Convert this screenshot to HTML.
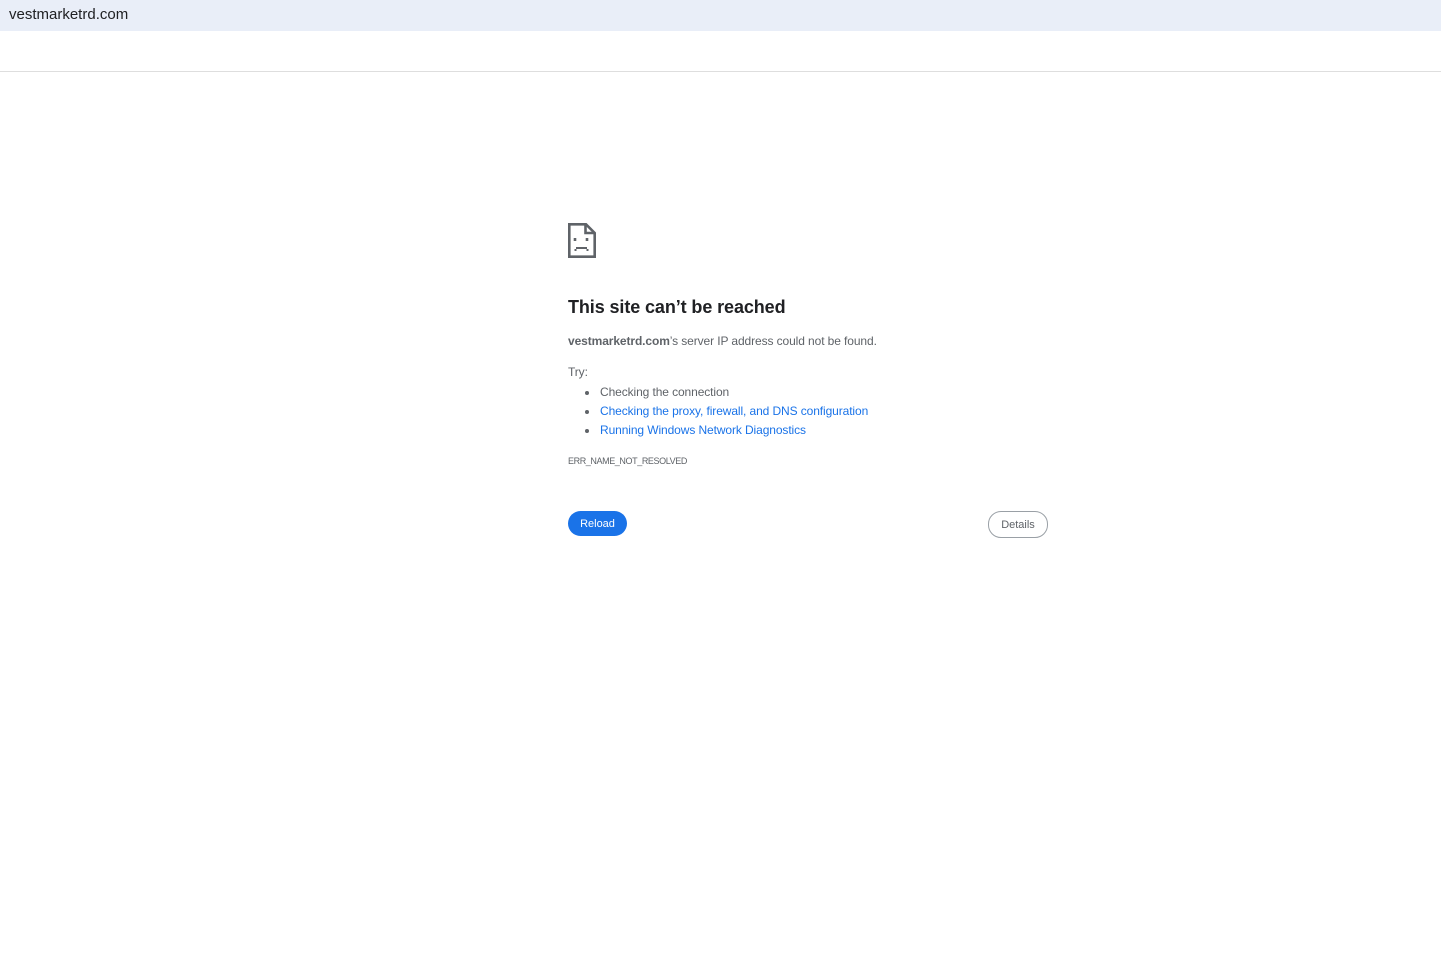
<!DOCTYPE html>
<html><head><meta charset="utf-8"><style>
body{margin:0;width:1441px;height:979px;background:#fff;font-family:"Liberation Sans",sans-serif;position:relative;overflow:hidden}
.bar{position:absolute;left:0;top:0;width:1441px;height:31px;background:#e9eef8}
.bar span{position:absolute;left:9px;top:6px;font-size:15px;color:#202124}
.line{position:absolute;left:0;top:71px;width:1441px;height:1px;background:#dedede}
.a{position:absolute;color:#5f6368;font-size:12px;white-space:nowrap;letter-spacing:-0.1px}
h1{position:absolute;left:568px;top:297px;margin:0;font-size:18px;font-weight:bold;color:#202124;letter-spacing:-0.1px}
.b{color:#1a73e8}
.dot{position:absolute;width:4px;height:4px;border-radius:2px;background:#5f6368}
.rl{position:absolute;left:568px;top:511px;width:59px;height:25px;border-radius:13px;background:#1a73e8;color:#fff;font-size:11px;text-align:center;line-height:27px}
.dt{position:absolute;left:988px;top:511px;width:58px;height:25px;border-radius:13px;border:1px solid #9aa0a6;color:#5f6368;font-size:11px;text-align:center;line-height:27px}
</style></head><body>
<div class="bar"><span>vestmarketrd.com</span></div>
<div class="line"></div>
<svg style="position:absolute;left:568px;top:223px" width="28" height="35" viewBox="0 0 28 35" fill="none" stroke="#5f6368" stroke-width="2.6">
<path d="M1.3 1.3H18L26.7 10V33.7H1.3Z"/><path d="M17.5 1.3V10H26.7"/>
<path d="M7 15v3M19 15v3" /><path d="M8 25h11M6.5 27h2M18.5 27h2" stroke-width="2"/>
</svg>
<h1>This site can’t be reached</h1>
<div class="a" style="left:568px;top:334px"><b style="color:#5f6368">vestmarketrd.com</b>’s server IP address could not be found.</div>
<div class="a" style="left:568px;top:365px">Try:</div>
<div class="dot" style="left:585px;top:391px"></div>
<div class="dot" style="left:585px;top:410px"></div>
<div class="dot" style="left:585px;top:429px"></div>
<div class="a" style="left:600px;top:385px">Checking the connection</div>
<div class="a b" style="left:600px;top:404px">Checking the proxy, firewall, and DNS configuration</div>
<div class="a b" style="left:600px;top:423px">Running Windows Network Diagnostics</div>
<div class="a" style="left:568px;top:456px;font-size:9px;letter-spacing:-0.4px">ERR_NAME_NOT_RESOLVED</div>
<div class="rl">Reload</div>
<div class="dt">Details</div>
</body></html>
